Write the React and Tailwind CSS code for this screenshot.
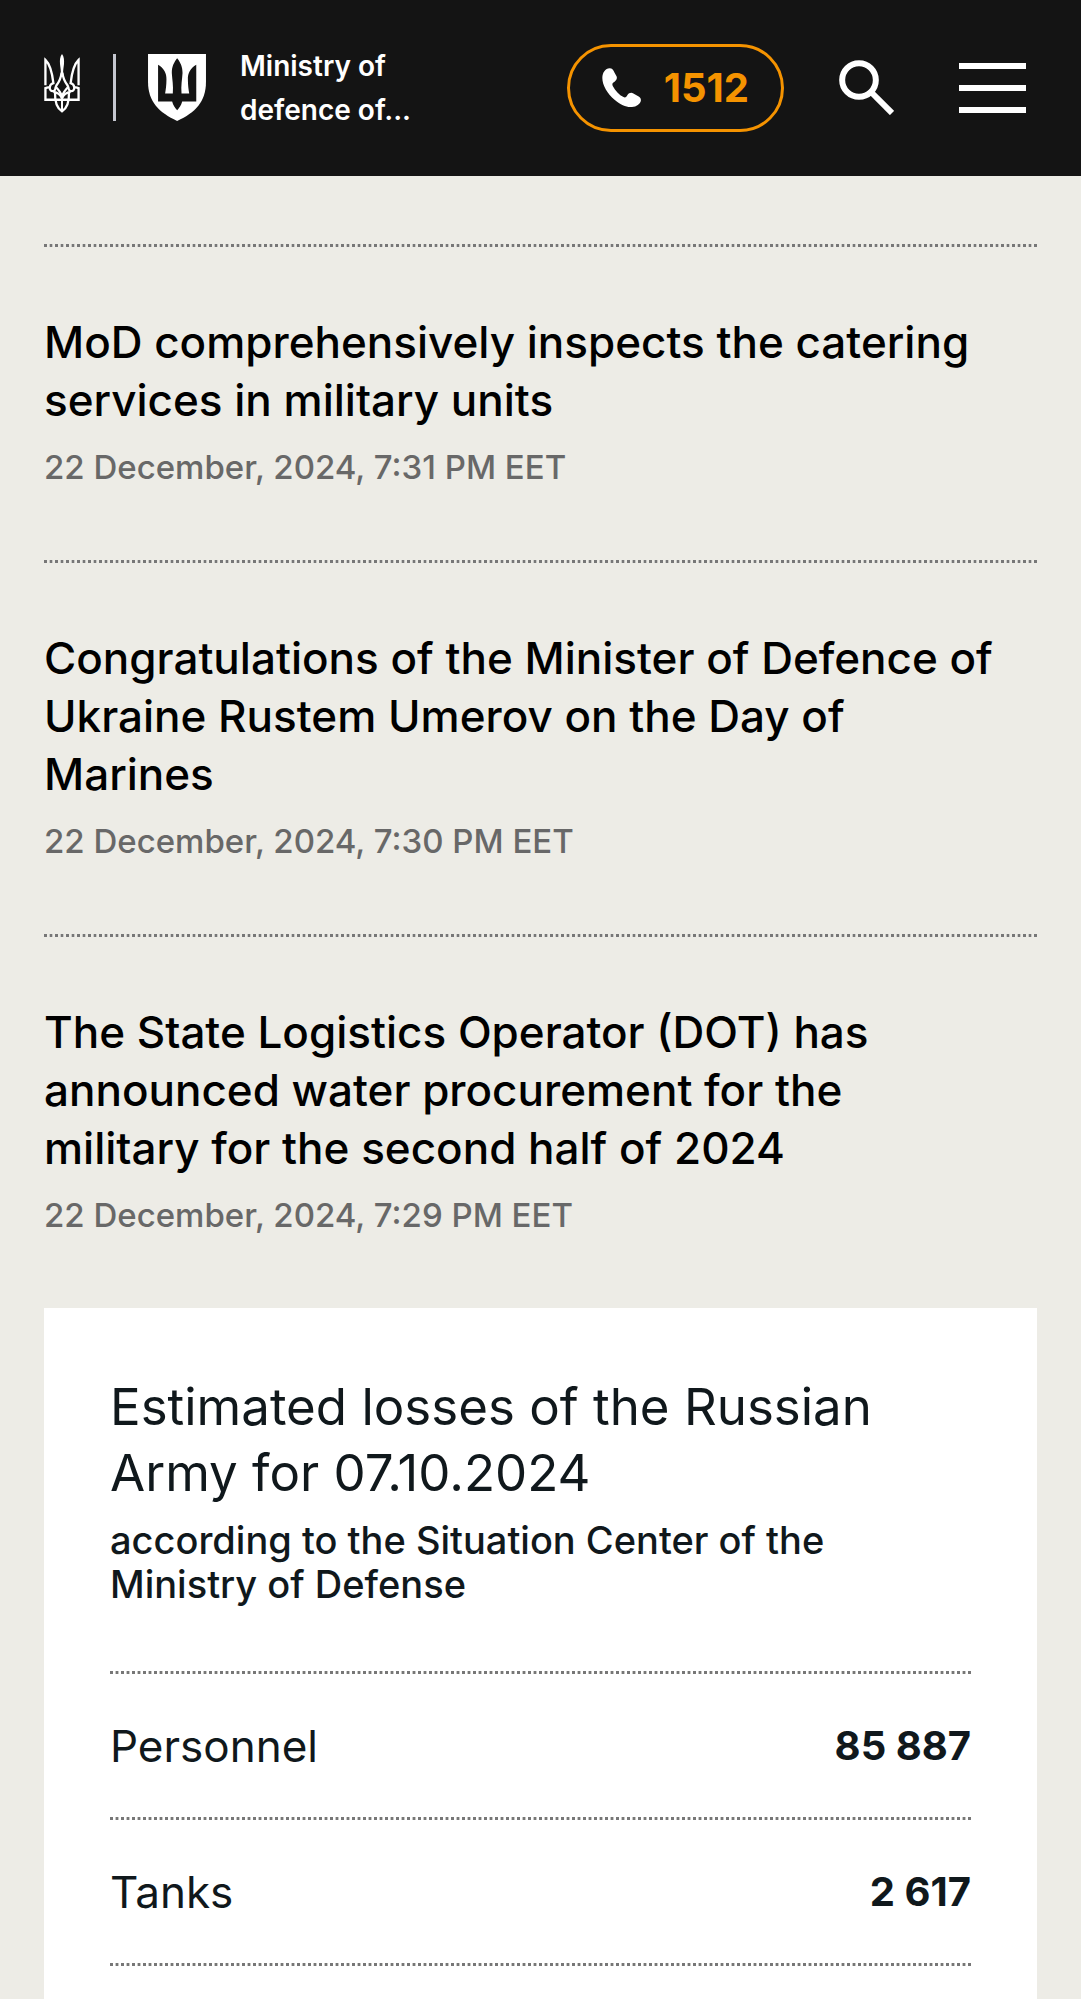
const news = [
  { title: "MoD comprehensively inspects the catering services in military units", date: "22 December, 2024, 7:31 PM EET" },
  { title: "Congratulations of the Minister of Defence of Ukraine Rustem Umerov on the Day of Marines", date: "22 December, 2024, 7:30 PM EET" },
  { title: "The State Logistics Operator (DOT) has announced water procurement for the military for the second half of 2024", date: "22 December, 2024, 7:29 PM EET" },
];

const losses = [
  { name: "Personnel", value: "85 887" },
  { name: "Tanks", value: "2 617" },
];

function DottedRule() {
  return (
    <div
      role="separator"
      className="h-[3px] bg-[repeating-linear-gradient(to_right,#777777_0_3px,transparent_3px_5px,#c8c8c5_5px_6px,#777777_6px_8px,#c8c8c5_8px_9px,transparent_9px_11px)]"
    />
  );
}

function Trident() {
  return (
    <svg viewBox="42 44 108 178" className="h-[59px] w-9 shrink-0" fill="none" stroke="white" strokeWidth="7" aria-hidden="true">
      <path d="M46 138V62C61 76 66 98 70 132C63 134 60 138 59 144C54 145 49 146 46 147V182H146V147C143 146 138 145 133 144C132 138 129 134 122 132C126 98 131 76 146 62V138" />
      <path d="M96 44C90 52 89 62 90 74C92 92 94 98 91 110H101C98 98 100 92 102 74C103 62 102 52 96 44Z" fill="white" stroke="none" />
      <path d="M95 100C92 122 86 130 79 139C75 146 78 154 70 156C63 157 58 152 59 144" />
      <path d="M97 100C100 122 106 130 113 139C117 146 114 154 122 156C129 157 134 152 133 144" />
      <path d="M76 142C84 150 92 158 96 172C100 158 108 150 116 142" />
      <path d="M70 158C85 160 92 168 96 178C100 168 107 160 122 158" />
      <path d="M75 160C74 188 82 208 96 217C110 208 118 188 117 160" />
      <path d="M96 174V216" strokeWidth="6" />
    </svg>
  );
}

function Shield() {
  return (
    <svg viewBox="355 42 173 200" className="h-[67px] w-[58px] shrink-0" aria-hidden="true">
      <path fill="white" d="M355 42H528V125C528 185 496 217 442 242C388 217 355 185 355 125Z" />
      <path
        fill="#141414"
        d="M385 74C402 84 411 100 410 118C410 135 408 148 406 160H429C431 136 427 118 426 99C426 80 432 68 442 55C452 68 458 80 458 99C457 118 453 136 455 160H478C476 148 474 135 474 118C473 100 482 84 499 74V184H457C454 196 448 204 442 210C436 204 430 196 427 184H385Z"
      />
    </svg>
  );
}

function Phone() {
  return (
    <svg viewBox="155 113 118 118" className="size-[39px] shrink-0" aria-hidden="true">
      <path
        fill="white"
        d="M156 143C156 128 165 114 178 114C186 114 190 120 193 127L199 138C202 145 198 151 192 155C186 158 185 162 188 168C195 182 207 194 220 201C226 204 229 200 232 195C236 189 243 186 250 190L266 199C272 202 274 208 272 214C267 226 254 231 241 231C226 231 211 224 193 209C172 191 156 165 156 143Z"
      />
    </svg>
  );
}

export default function App() {
  return (
    <div className="flex min-h-screen flex-col bg-[#edece6] font-['Inter',sans-serif] text-black">
      <header className="flex h-44 shrink-0 items-center justify-between bg-[#141414] pr-[55px] pb-px pl-11 text-white">
        <a href="#home" className="flex items-center">
          <span className="flex items-start">
            <Trident />
            <span className="mr-8 ml-[33px] h-[67px] w-[3px] bg-[#c5c7d0]" />
            <Shield />
          </span>
          <span className="ml-[34px] text-[28px] leading-[44px] font-semibold">
            Ministry of
            <br />
            defence of...
          </span>
        </a>
        <div className="flex items-center">
          <a
            href="tel:1512"
            className="flex h-[88px] w-[217px] items-center justify-between rounded-full border-3 border-[#f59300] px-8 text-[40px] font-bold text-[#f59300]"
          >
            <Phone />
            1512
          </a>
          <button type="button" aria-label="Search" className="ml-[55px]">
            <svg viewBox="86 90 165 165" className="size-[55px]" fill="none" stroke="white" aria-hidden="true">
              <circle cx="146" cy="150" r="50.500" strokeWidth="18" />
              <path d="M182 186L245 249" strokeWidth="18" />
            </svg>
          </button>
          <button type="button" aria-label="Menu" className="ml-[65px] flex w-[67px] flex-col gap-4">
            <span className="h-1.5 bg-white" />
            <span className="h-1.5 bg-white" />
            <span className="h-1.5 bg-white" />
          </button>
        </div>
      </header>

      <main className="flex flex-1 flex-col px-11 pt-[68px]">
        {news.map((item) => (
          <article key={item.date}>
            <DottedRule />
            <div className="pt-[66px] pb-[70px]">
              <h2 className="pr-9 text-[44px] leading-[58px] font-medium">
                <a href="#news">{item.title}</a>
              </h2>
              <p className="mt-4 text-[33px] leading-[45px] font-medium text-[#686868]">{item.date}</p>
            </div>
          </article>
        ))}

        <section className="flex-1 bg-white px-[66px] pt-[66px] text-[#10181c]">
          <h2 className="text-[51px] leading-[66px]">Estimated losses of the Russian Army for 07.10.2024</h2>
          <p className="mt-3 text-[38px] leading-[44px] font-medium">according to the Situation Center of the Ministry of Defense</p>
          <dl className="mt-[65px]">
            {losses.map((item) => (
              <div key={item.name}>
                <DottedRule />
                <div className="flex h-[143px] items-center justify-between text-[44px]">
                  <dt>{item.name}</dt>
                  <dd className="text-[40px] font-bold">{item.value}</dd>
                </div>
              </div>
            ))}
          </dl>
          <DottedRule />
        </section>
      </main>
    </div>
  );
}
